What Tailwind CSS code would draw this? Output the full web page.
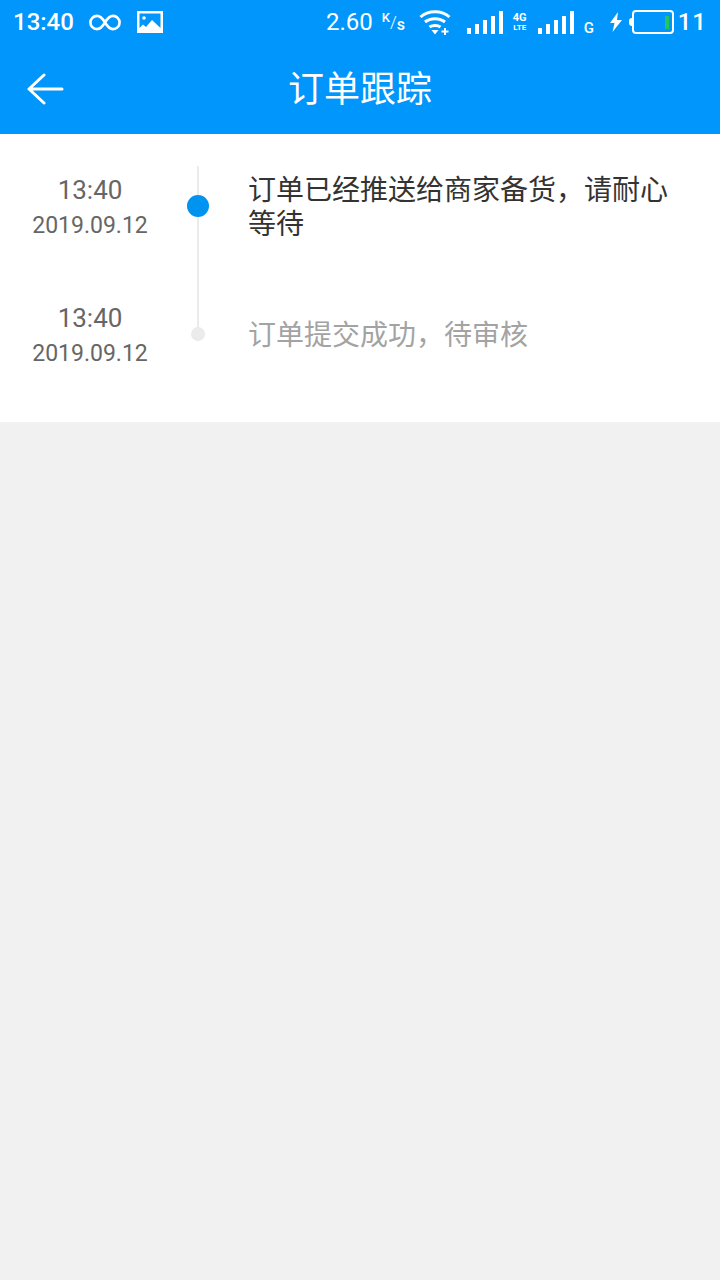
<!DOCTYPE html>
<html lang="zh-CN">
<head>
  <meta charset="UTF-8">
  <title>订单跟踪</title>
  <script src="https://cdn.jsdelivr.net/npm/@tailwindcss/browser@4"></script>
</head>
<body class="bg-[#f1f1f1] font-['Roboto','Noto_Sans_CJK_SC',sans-serif]">
  <div class="w-[720px] h-[1280px] flex flex-col">
    <!-- status bar -->
    <div class="h-[44px] bg-[#0096fb] text-white flex items-center justify-between pl-[13px] pr-[13px]">
      <div class="flex items-center">
        <span class="text-[24px] leading-none font-medium w-[62px]">13:40</span>
        <svg class="ml-[14px]" width="32" height="17" viewBox="0 0 34 18" fill="none" stroke="white" stroke-width="2.800"><path d="M17 9C14 4 11.500 2 8.500 2a7 7 0 0 0 0 14c3 0 5.500-2 8.500-7s5.500-7 8.500-7a7 7 0 0 1 0 14c-3 0-5.500-2-8.500-7z"/></svg>
        <svg class="ml-[16px]" width="26" height="22" viewBox="0 0 26 22"><path fill="white" fill-rule="evenodd" d="M0 0h26v22H0zM2.500 2.500V17L6 13.500l3 2.500 6-7 8.500 8V2.500z"/><circle cx="7" cy="7" r="1.800" fill="white"/></svg>
      </div>
      <div class="flex items-center">
        <span class="text-[24px] leading-none">2.60</span>
        <span class="ml-[9px] w-[22px] font-medium leading-none whitespace-nowrap"><span class="relative top-[-6px] text-[13px]">K</span><span class="font-light text-[17px]">/</span><span class="relative top-[2px] text-[16px]">s</span></span>
        <svg class="ml-[15px]" width="32" height="26" viewBox="0 0 32 26" fill="none" stroke="white" stroke-width="3"><path d="M1.500 8C9 1 23 1 30.500 8M6 13c5.500-4.500 14.500-4.500 20 0M10.500 18c3-2 8-2 11 0"/><path fill="white" stroke="none" d="M12.500 21h7L16 25.500zM25 19h2v2.500h2.500v2H27V26h-2v-2.500h-2.500v-2H25z"/></svg>
        <svg class="ml-[16px] mt-[1px]" width="36" height="23" viewBox="0 0 36 23" fill="white"><rect x="0" y="17" width="4" height="6"/><rect x="8" y="13" width="4" height="10"/><rect x="16" y="9" width="4" height="14"/><rect x="24" y="5" width="4" height="18"/><rect x="32" y="0" width="4" height="23"/></svg>
        <span class="ml-[9px] w-[16px] flex flex-col items-center font-bold leading-none"><span class="text-[11px]">4G</span><span class="text-[8px] mt-[1px]">LTE</span></span>
        <svg class="ml-[10px] mt-[1px]" width="36" height="23" viewBox="0 0 36 23" fill="white"><rect x="0" y="17" width="4" height="6"/><rect x="8" y="13" width="4" height="10"/><rect x="16" y="9" width="4" height="14"/><rect x="24" y="5" width="4" height="18"/><rect x="32" y="0" width="4" height="23"/></svg>
        <span class="ml-[10px] mt-[12px] w-[10px] text-[15px] leading-none font-medium">G</span>
        <svg class="ml-[16px]" width="12" height="20" viewBox="0 0 12 20" fill="white"><path d="M8 0 0 11h4.500l-2 9L12 8H7z"/></svg>
        <div class="ml-[7px] flex items-center">
          <div class="w-[3px] h-[8px] bg-white rounded-l-sm"></div>
          <div class="w-[42px] h-[24px] border-[2.500px] border-white rounded-[4px] flex justify-end items-center pr-[3px]"><div class="w-[4px] h-[13px] bg-[#22c55e]"></div></div>
        </div>
        <span class="ml-[4px] text-[24px] leading-none font-medium tracking-[1px]">11</span>
      </div>
    </div>
    <!-- title bar -->
    <div class="h-[90px] bg-[#0096fb] relative flex items-center justify-center">
      <svg class="absolute left-[27px] top-[29px]" width="37" height="32" viewBox="0 0 37 32" fill="none" stroke="white" stroke-width="3" stroke-linecap="round" stroke-linejoin="round"><path d="M2 16h33M17 2 2 16l15 14"/></svg>
      <h1 class="text-[36px] leading-none text-white mt-[2px]">订单跟踪</h1>
    </div>
    <!-- timeline -->
    <div class="bg-white h-[288px] pt-[32px] relative">
      <div class="absolute left-[197px] top-[32px] w-[2px] h-[168px] bg-[#ebebeb]"></div>
      <div class="h-[128px] flex">
        <div class="w-[180px] text-center text-[#666] leading-none">
          <div class="text-[26px] mt-[11px]">13:40</div>
          <div class="text-[23px] mt-[11px]">2019.09.12</div>
        </div>
        <div class="w-[36px] flex justify-center relative"><div class="w-[22px] h-[22px] mt-[29px] rounded-full bg-[#0094f0]"></div></div>
        <div class="ml-[32px] w-[430px] mt-[8px] text-[28px] leading-[34px] text-[#333]">订单已经推送给商家备货，请耐心等待</div>
      </div>
      <div class="h-[128px] flex">
        <div class="w-[180px] text-center text-[#666] leading-none">
          <div class="text-[26px] mt-[11px]">13:40</div>
          <div class="text-[23px] mt-[11px]">2019.09.12</div>
        </div>
        <div class="w-[36px] flex justify-center relative"><div class="w-[14px] h-[14px] mt-[33px] rounded-full bg-[#ebebeb]"></div></div>
        <div class="ml-[32px] w-[430px] mt-[25px] text-[28px] leading-[34px] text-[#a3a3a3]">订单提交成功，待审核</div>
      </div>
    </div>
  </div>
</body>
</html>
